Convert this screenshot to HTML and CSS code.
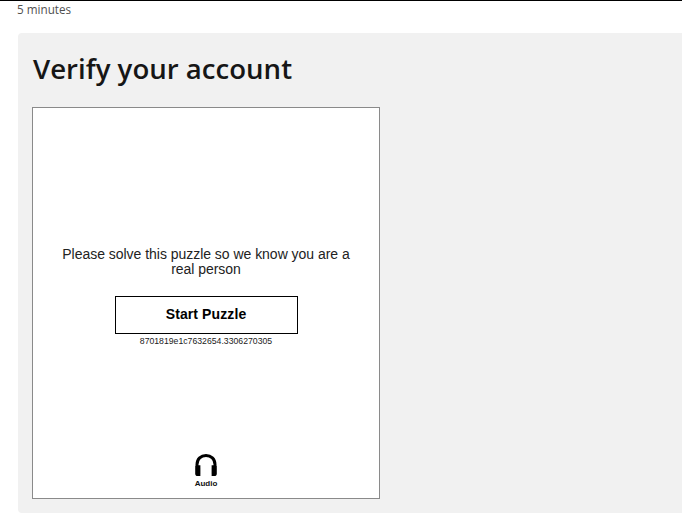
FILE: index.html
```html
<!DOCTYPE html>
<html lang="en">
<head>
	<meta charset="UTF-8">
	<title>Verify your account</title>
	<link rel="stylesheet" href="styles.css">
</head>
<body>
	<div class="time">5 minutes</div>
	<div class="panel">
		<h1>Verify your account</h1>
		<div class="frame">
			<div class="center">
				<p class="prompt">Please solve this puzzle so we know you are a real person</p>
				<button class="start">Start Puzzle</button>
				<div class="token">8701819e1c7632654.3306270305</div>
			</div>
			<div class="audio">
				<svg width="24" height="24" viewBox="0 0 24 24">
					<path d="M3 14V11.5C3 5.8 7 2.4 12 2.4S21 5.8 21 11.5V14" fill="none" stroke="#000" stroke-width="3"/>
					<path d="M1.2 14.5C1.2 13 2.2 12.2 3.5 12.2H6.4V23H3.5C2.2 23 1.2 22.2 1.2 20.7Z"/>
					<path d="M22.8 14.5C22.8 13 21.8 12.2 20.5 12.2H17.6V23H20.5C21.8 23 22.8 22.2 22.8 20.7Z"/>
				</svg>
				<span>Audio</span>
			</div>
		</div>
	</div>
</body>
</html>
```

FILE: styles.css
```css
*{
	padding: 0;
	margin: 0;
	box-sizing: border-box;
}
body{
	border-top: 1px solid #000;
	height: 521px;
	overflow: hidden;
	background: #fff;
	font-family: "Liberation Sans", Arial, sans-serif;
}
.time{
	font-family: "Open Sans", sans-serif;
	font-size: 11.7px;
	line-height: 16px;
	color: #505050;
	padding-left: 17px;
}
.panel{
	margin: 16px 0 0 18px;
	height: 480px;
	padding: 14px 14px 15px;
	background: #f1f1f1;
	border-radius: 4px 0 0 4px;
}
h1{
	font-family: "Open Sans", sans-serif;
	font-size: 27.6px;
	font-weight: 600;
	line-height: 42px;
	color: #161616;
	padding-left: 1px;
	margin-bottom: 18px;
}
.frame{
	width: 348px;
	height: 392px;
	background: #fff;
	border: 1px solid #8a8a8a;
	display: flex;
	flex-direction: column;
	align-items: center;
}
.center{
	display: flex;
	flex-direction: column;
	align-items: center;
	padding-top: 139px;
	flex: 1;
}
.prompt{
	width: 300px;
	font-size: 14px;
	letter-spacing: -0.03px;
	line-height: 15px;
	text-align: center;
	color: #222;
	margin-bottom: 19px;
}
.start{
	width: 183px;
	height: 38px;
	padding-bottom: 2px;
	background: #fff;
	border: 1px solid #000;
	font-family: "Liberation Sans", Arial, sans-serif;
	font-size: 14px;
	font-weight: 700;
	letter-spacing: 0.1px;
	color: #000;
}
.token{
	font-size: 8.7px;
	line-height: 12px;
	margin-top: 1px;
	color: #222;
}
.audio{
	display: flex;
	flex-direction: column;
	align-items: center;
	padding-bottom: 9px;
}
.audio span{
	font-size: 8px;
	font-weight: 700;
	line-height: 10px;
	margin-top: 2px;
	color: #111;
}
```
